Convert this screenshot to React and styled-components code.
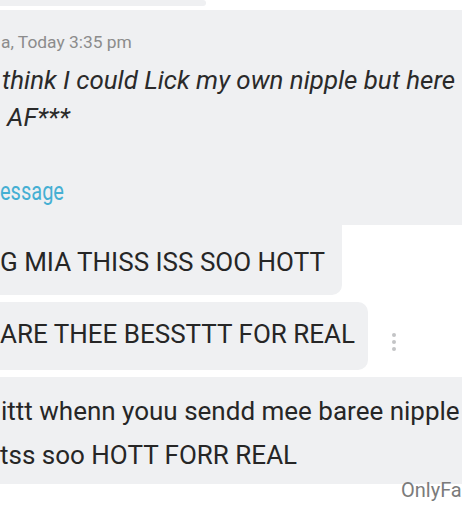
import React from 'react'
import styled, { createGlobalStyle } from 'styled-components'

const GlobalStyle = createGlobalStyle`
  html, body {
    margin: 0;
    padding: 0;
    background: #ffffff;
    overflow: hidden;
  }
  body {
    font-family: Roboto, "Noto Sans", Arial, sans-serif;
    color: #262626;
  }
`

const Thread = styled.div`
  position: relative;
  width: 462px;
  height: 512px;
  overflow: hidden;
  display: flex;
  flex-direction: column;
  align-items: flex-start;
`

const Bubble = styled.div`
  background: #eff0f2;
  box-sizing: border-box;
  width: ${(p) => (p.$width ? `${p.$width}px` : '100%')};
  height: ${(p) => p.$height}px;
  margin-top: ${(p) => p.$gap || 0}px;
  border-radius: ${(p) => p.$radius || '0 10px 10px 0'};
  padding-top: ${(p) => p.$padTop || 0}px;
  overflow: hidden;
  display: flex;
  flex-direction: column;
`

const Quote = styled.div`
  display: flex;
  flex-direction: column;
  width: 100%;
`

const Meta = styled.div`
  font-size: 17.4px;
  line-height: 20px;
  color: #8c8c8c;
  white-space: nowrap;
  padding-left: 1px;
`

const QuoteLine = styled.div`
  font-size: 25.9px;
  font-style: italic;
  line-height: 37px;
  color: #2a2a2a;
  white-space: nowrap;
  padding-left: ${(p) => p.$indent || 0}px;
  margin-top: ${(p) => p.$top || 0}px;
`

const ReplyLink = styled.div`
  align-self: flex-start;
  font-size: 25px;
  line-height: 28px;
  color: #45afd3;
  white-space: nowrap;
  transform: scaleX(0.8);
  transform-origin: left center;
  margin-top: ${(p) => p.$top || 0}px;
`

const Divider = styled.div`
  width: 322px;
  height: 1px;
  background: #d6d7d9;
  margin-top: ${(p) => p.$top || 0}px;
`

const Line = styled.div`
  font-size: 26px;
  line-height: ${(p) => p.$lh || 30}px;
  color: #262626;
  white-space: nowrap;
  padding-left: ${(p) => p.$indent || 0}px;
`

const Row = styled.div`
  display: flex;
  align-items: center;
  gap: 24px;
  margin-top: ${(p) => p.$gap || 0}px;
`

const MoreDots = styled.div`
  display: flex;
  flex-direction: column;
  gap: 3px;
  margin-top: 12px;

  span {
    width: 4px;
    height: 4px;
    border-radius: 50%;
    background: #c3c4c6;
  }
`

const Watermark = styled.div`
  position: absolute;
  left: 401px;
  top: 478px;
  font-size: 20px;
  line-height: 24px;
  color: #7b7b7b;
  white-space: nowrap;
`

const App = () => (
  <>
    <GlobalStyle />
    <Thread>
      <Bubble $width={206} $height={6} />

      <Bubble $gap={4} $height={215} $radius="0" $padTop={22}>
        <Quote>
          <Meta>a, Today 3:35 pm</Meta>
          <QuoteLine $top={10} $indent={2}>think I could Lick my own nipple but here</QuoteLine>
          <QuoteLine $indent={7}>AF***</QuoteLine>
          <ReplyLink $top={42}>essage</ReplyLink>
          <Divider $top={27} />
        </Quote>
      </Bubble>

      <Bubble $width={342} $height={70} $padTop={22} $radius="0 0 10px 0">
        <Line>G MIA THISS ISS SOO HOTT</Line>
      </Bubble>

      <Row $gap={7}>
        <Bubble $width={368} $height={68} $padTop={17}>
          <Line>ARE THEE BESSTTT FOR REAL</Line>
        </Bubble>
        <MoreDots>
          <span />
          <span />
          <span />
        </MoreDots>
      </Row>

      <Bubble $gap={7} $height={107} $padTop={12} $radius="0">
        <Line $lh={44} $indent={1}>ittt whenn youu sendd mee baree nipple</Line>
        <Line $lh={44}>tss soo HOTT FORR REAL</Line>
      </Bubble>

      <Watermark>OnlyFa</Watermark>
    </Thread>
  </>
)

export default App
